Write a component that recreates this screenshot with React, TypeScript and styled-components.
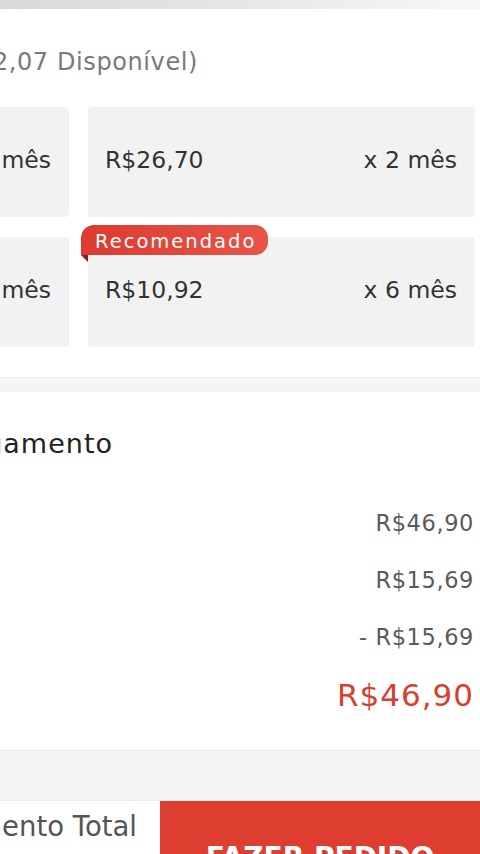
import { FC } from 'react';
import styled, { createGlobalStyle } from 'styled-components';

const GlobalStyle = createGlobalStyle`
  html, body {
    margin: 0;
    padding: 0;
    background: #ffffff;
    overflow: hidden;
  }
  body {
    font-family: 'DejaVu Sans', 'Open Sans', sans-serif;
    color: #333;
  }
`;

const Viewport = styled.div`
  width: 480px;
  height: 854px;
  overflow: hidden;
`;

// the screenshot is a zoomed crop of a wider checkout page
const Canvas = styled.div`
  width: 810px;
  margin-left: -330px;
  display: flex;
  flex-direction: column;
`;

const TopBar = styled.div`
  height: 9px;
  background: linear-gradient(to right, #d6d6d6 0, #d9d9d9 330px, #e6e6e6 560px, #f8f8f8 810px);
`;

const Section = styled.section`
  background: #fff;
  padding: 0 5px 0 12px;
`;

const BalanceRow = styled.div`
  height: 98px;
  padding-top: 8px;
  box-sizing: border-box;
  display: flex;
  align-items: center;
`;

const Balance = styled.span`
  width: 516px;
  text-align: right;
  font-size: 24px;
  letter-spacing: 0.6px;
  color: #7a7a7a;
  white-space: nowrap;
`;

const PlanGrid = styled.div`
  display: grid;
  grid-template-columns: 387px 387px;
  column-gap: 19px;
  row-gap: 20px;
  padding-bottom: 30px;
`;

const PlanCard = styled.div`
  position: relative;
  height: 110px;
  box-sizing: border-box;
  padding: 0 18px 4px 17px;
  background: #f2f2f2;
  border-radius: 4px;
  display: flex;
  align-items: center;
  justify-content: space-between;
  font-size: 23.5px;
  color: #333;
`;

const Badge = styled.span`
  position: absolute;
  top: -12px;
  left: -7px;
  height: 30px;
  padding: 2px 12px 0 14px;
  box-sizing: border-box;
  display: flex;
  align-items: center;
  background: linear-gradient(to right, #de3a2f, #e85448);
  color: #fff;
  font-size: 19.5px;
  letter-spacing: 2px;
  border-radius: 13px 13px 13px 0;

  &::after {
    content: '';
    position: absolute;
    left: 0;
    bottom: -7px;
    border-top: 7px solid #8e1d14;
    border-left: 7px solid transparent;
  }
`;

const Band = styled.div<{ $h: number }>`
  height: ${p => p.$h}px;
  box-sizing: border-box;
  background: #f5f5f5;
  border-top: 1px solid #ededed;
`;

const SummaryHead = styled.div`
  height: 102px;
  display: flex;
  align-items: center;
`;

const SummaryTitle = styled.h2`
  margin: 0;
  width: 431px;
  text-align: right;
  font-size: 27px;
  font-weight: 400;
  letter-spacing: 1px;
  color: #222;
  white-space: nowrap;
`;

const SummaryList = styled.div`
  display: flex;
  flex-direction: column;
  padding: 0 1px 25px 0;
`;

const SummaryRow = styled.div<{ $total?: boolean }>`
  height: ${p => (p.$total ? 60 : 57)}px;
  display: flex;
  align-items: center;
  justify-content: space-between;
  font-size: ${p => (p.$total ? 31 : 22.5)}px;
  letter-spacing: ${p => (p.$total ? 1 : 0.6)}px;
  color: ${p => (p.$total ? '#d6402f' : '#5a5a5a')};
`;

const BottomBar = styled.div`
  height: 112px;
  display: flex;
  border-top: 1px solid #ececec;
`;

const TotalBox = styled.div`
  flex: 1;
  background: #fff;
  display: flex;
  justify-content: flex-end;
  align-items: flex-start;
  padding: 7px 23px 0 0;
`;

const TotalLabel = styled.span`
  font-size: 27.5px;
  color: #555;
  line-height: 36px;
`;

const OrderButton = styled.button`
  width: 320px;
  border: none;
  background: #dd3e2f;
  color: #fff;
  font-family: inherit;
  font-size: 28px;
  font-weight: 700;
`;

const plans = [
  { price: 'R$46,90', months: 'x 1 mês' },
  { price: 'R$26,70', months: 'x 2 mês' },
  { price: 'R$15,97', months: 'x 3 mês' },
  { price: 'R$10,92', months: 'x 6 mês', badge: 'Recomendado' },
];

const summary = [
  { label: 'Subtotal dos produtos', value: 'R$46,90' },
  { label: 'Subtotal do envio', value: 'R$15,69' },
  { label: 'Desconto no frete', value: '- R$15,69' },
];

const App: FC = () => (
  <Viewport>
    <GlobalStyle />
    <Canvas>
      <TopBar />
      <Section>
        <BalanceRow>
          <Balance>Moedas Shopee (R$12,07 Disponível)</Balance>
        </BalanceRow>
        <PlanGrid>
          {plans.map(plan => (
            <PlanCard key={plan.months}>
              {plan.badge && <Badge>{plan.badge}</Badge>}
              <span>{plan.price}</span>
              <span>{plan.months}</span>
            </PlanCard>
          ))}
        </PlanGrid>
      </Section>
      <Band $h={15} />
      <Section>
        <SummaryHead>
          <SummaryTitle>Detalhes do pagamento</SummaryTitle>
        </SummaryHead>
        <SummaryList>
          {summary.map(row => (
            <SummaryRow key={row.label}>
              <span>{row.label}</span>
              <span>{row.value}</span>
            </SummaryRow>
          ))}
          <SummaryRow $total>
            <span>Pagamento total</span>
            <span>R$46,90</span>
          </SummaryRow>
        </SummaryList>
      </Section>
      <Band $h={50} />
      <BottomBar>
        <TotalBox>
          <TotalLabel>Pagamento Total</TotalLabel>
        </TotalBox>
        <OrderButton>FAZER PEDIDO</OrderButton>
      </BottomBar>
    </Canvas>
  </Viewport>
);

export default App;
